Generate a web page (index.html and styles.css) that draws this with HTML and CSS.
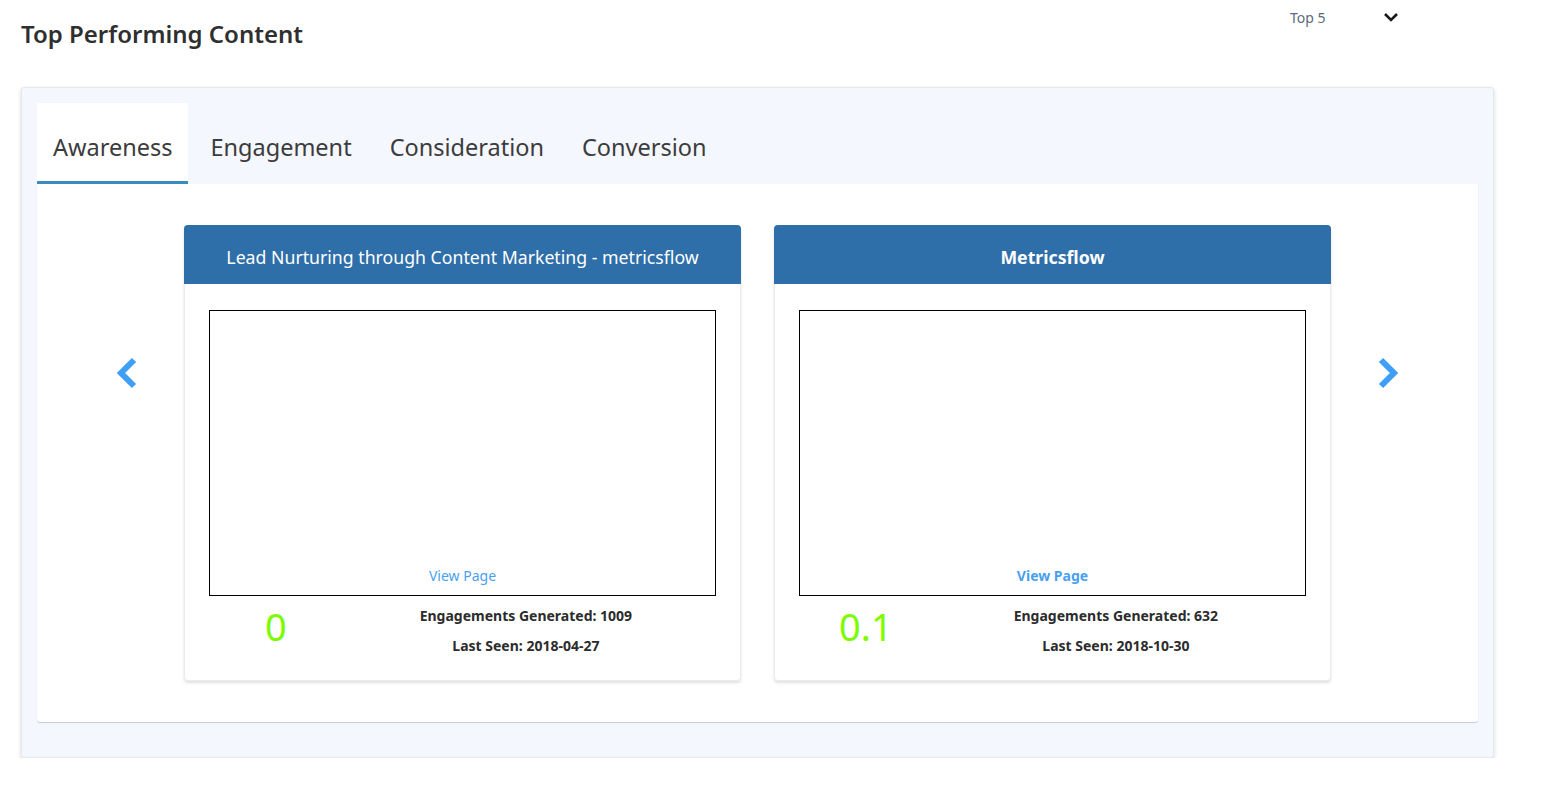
FILE: index.html
```html
<!DOCTYPE html>
<html>
<head>
<meta charset="utf-8">
<link rel="stylesheet" href="styles.css">
</head>
<body>
<div class="page">
  <div class="header">
    <h1 class="title">Top Performing Content</h1>
    <div class="dropdown">
      <span class="dropdown-label">Top 5</span>
      <svg class="dropdown-chevron" width="16" height="10" viewBox="0 0 16 10"><polyline points="2,2 8,8 14,2" fill="none" stroke="#1a1a1a" stroke-width="2.6"/></svg>
    </div>
  </div>
  <div class="panel">
    <div class="tabs">
      <div class="tab active">Awareness</div>
      <div class="tab">Engagement</div>
      <div class="tab">Consideration</div>
      <div class="tab">Conversion</div>
    </div>
    <div class="tab-content">
      <div class="carousel">
        <div class="arrow">
          <svg width="22" height="32" viewBox="0 0 22 32"><polyline points="19,3 6,16 19,29" fill="none" stroke="#3f9ef5" stroke-width="6"/></svg>
        </div>
        <div class="card">
          <div class="card-header">Lead Nurturing through Content Marketing - metricsflow</div>
          <div class="card-body">
            <div class="preview"><a class="view-link">View Page</a></div>
            <div class="stats">
              <div class="score">0</div>
              <div class="meta">
                <div>Engagements Generated: 1009</div>
                <div>Last Seen: 2018-04-27</div>
              </div>
            </div>
          </div>
        </div>
        <div class="card">
          <div class="card-header bold">Metricsflow</div>
          <div class="card-body">
            <div class="preview"><a class="view-link bold">View Page</a></div>
            <div class="stats">
              <div class="score">0.1</div>
              <div class="meta">
                <div>Engagements Generated: 632</div>
                <div>Last Seen: 2018-10-30</div>
              </div>
            </div>
          </div>
        </div>
        <div class="arrow">
          <svg width="22" height="32" viewBox="0 0 22 32"><polyline points="3,3 16,16 3,29" fill="none" stroke="#3f9ef5" stroke-width="6"/></svg>
        </div>
      </div>
    </div>
  </div>
</div>
</body>
</html>
```
FILE: styles.css
```css
* { box-sizing: border-box; }
html, body { margin: 0; padding: 0; background: #fff; }
body { font-family: "Noto Sans", "Open Sans", sans-serif; color: #333; }
.page { padding: 0 62px 0 21px; }
.header { display: flex; justify-content: space-between; align-items: flex-start; height: 87px; }
.title { margin: 17px 0 0; font-size: 24px; font-weight: 600; color: #2f2f2f; line-height: 33px; }
.dropdown { display: flex; align-items: center; justify-content: space-between; width: 120px; margin: 8px 84px 0 0; }
.dropdown-label { font-size: 14px; color: #5b6b7d; line-height: 19px; }
.dropdown-chevron { margin-right: 11px; margin-top: -1px; }
.panel { background: #f4f7fd; border: 1px solid #e6e8ec; border-radius: 3px; box-shadow: 0 2px 4px rgba(0,0,0,0.16); padding: 15px 15px 35px; }
.tabs { display: flex; gap: 6px; }
.tab { font-size: 23.5px; line-height: 31px; color: #3c3c3c; padding: 29px 16px 18px; border-bottom: 3px solid transparent; }
.tab.active { background: #fff; border-bottom-color: #3a8bbf; }
.tab-content { background: #fff; border-radius: 0 0 3px 3px; box-shadow: 0 1px 1px rgba(0,0,0,0.18); padding: 41px 0; height: 538px; }
.carousel { display: flex; justify-content: center; gap: 47px; }
.arrow { width: 22px; height: 32px; margin-top: 132px; }
.arrow svg { display: block; }
.card { width: 557px; height: 456px; background: #fff; border: 1px solid #ececec; border-radius: 4px; box-shadow: 0 2px 3px rgba(0,0,0,0.12); }
.card + .card { margin-left: -14px; }
.card-header { background: #2e6ea9; color: #fff; height: 59px; margin: -1px -1px 0; border-radius: 4px 4px 0 0; display: flex; align-items: center; justify-content: center; font-size: 17.7px; padding-top: 4px; }
.bold { font-weight: 700; }
.card-body { padding: 26px 24px 0; }
.preview { height: 286px; border: 1px solid #000; display: flex; align-items: flex-end; justify-content: center; padding-bottom: 9px; }
.view-link { color: #4a9ff0; font-size: 14px; line-height: 20px; }
.stats { display: flex; align-items: center; height: 60px; }
.score { width: 25%; text-align: center; color: #7cfc00; font-size: 38px; line-height: 40px; padding: 0 0 0 7px; }
.meta { width: 75%; text-align: center; font-size: 14px; font-weight: 700; color: #2c2c2c; line-height: 30px; padding-top: 10px; }
```
